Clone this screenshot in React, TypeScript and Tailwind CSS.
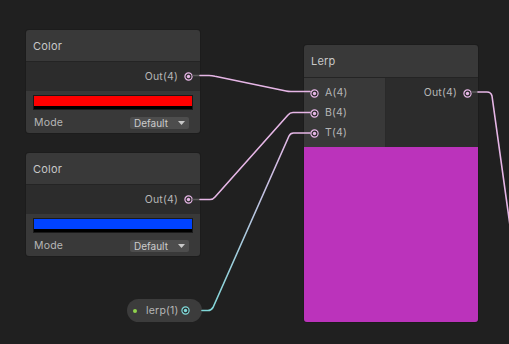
import React from 'react'

const PINK = '#e6b6e6'
const CYAN = '#7fd8d8'

function Port({ color = PINK }: { color?: string }) {
  return (
    <svg width="9" height="9" viewBox="0 0 9 9" className="shrink-0">
      <circle cx="4.5" cy="4.5" r="3.6" fill="#2b2b2b" stroke={color} strokeWidth="1.2" />
      <circle cx="4.5" cy="4.5" r="1.7" fill={color} />
    </svg>
  )
}

function ColorNode({ top, swatch }: { top: string; swatch: string }) {
  return (
    <div className={`absolute left-[26px] ${top} w-[174px] rounded-[3px] overflow-hidden bg-[#393939] shadow-[0_0_0_1px_#1c1c1c]`}>
      <div className="h-[31px] flex items-center pt-[1px] px-[7px] text-[11px] text-[#c8c8c8] tracking-[0.2px]">Color</div>
      <div className="h-[30px] bg-[#2c2c2c] border-t border-[#242424] flex items-center justify-end gap-[6px] pr-[7px] text-[10.5px] text-[#b6b6b6] tracking-[0.2px]">
        <span>Out(4)</span>
        <Port />
      </div>
      <div className="px-[7px] pt-[4px] pb-[4px]">
        <div className="h-[15px] border border-[#1a1a1a] bg-black">
          <div className={`h-[10px] ${swatch}`} />
        </div>
        <div className="mt-[7px] h-[12px] flex items-center justify-between">
          <span className="ml-[1px] text-[10.5px] text-[#b6b6b6] tracking-[0.2px]">Mode</span>
          <div className="w-[59px] h-[12px] mr-[4px] rounded-[2px] bg-[#4d4d4d] flex items-center justify-between pl-[4px] pr-[4px] text-[10px] text-[#cccccc]">
            <span>Default</span>
            <svg width="7" height="4" viewBox="0 0 7 4">
              <path d="M0 0 H7 L3.5 4 Z" fill="#c8c8c8" />
            </svg>
          </div>
        </div>
      </div>
    </div>
  )
}

export default function App() {
  return (
    <div
      className="relative w-[509px] h-[344px] overflow-hidden bg-[#202020]"
      style={{ fontFamily: 'Inter, "Noto Sans", sans-serif' }}
    >
      <ColorNode top="top-[30px]" swatch="bg-[#ff0000]" />
      <ColorNode top="top-[153px]" swatch="bg-[#0043ff]" />

      <div className="absolute left-[304px] top-[45px] w-[174px] rounded-[3px] overflow-hidden bg-[#393939] shadow-[0_0_0_1px_#1c1c1c]">
        <div className="h-[32px] flex items-center pt-[1px] px-[7px] text-[11px] text-[#c8c8c8] tracking-[0.2px]">Lerp</div>
        <div className="h-[70px] flex border-t border-[#242424]">
          <div className="w-[82px] bg-[#393939] pt-[5px] border-r border-[#2a2a2a]">
            {['A(4)', 'B(4)', 'T(4)'].map((l) => (
              <div key={l} className="h-[20px] flex items-center gap-[6px] pl-[6px] text-[10.5px] text-[#b6b6b6] tracking-[0.2px]">
                <Port />
                <span>{l}</span>
              </div>
            ))}
          </div>
          <div className="flex-1 bg-[#2c2c2c] pt-[5px]">
            <div className="h-[20px] flex items-center justify-end gap-[6px] pr-[6px] text-[10.5px] text-[#b6b6b6] tracking-[0.2px]">
              <span>Out(4)</span>
              <Port />
            </div>
          </div>
        </div>
        <div className="h-[175px] bg-[#bb33bb]" />
      </div>

      <div className="absolute left-[127px] top-[299px] w-[75px] h-[23px] rounded-full bg-[#3c3c3c] flex items-center">
        <div className="ml-[6px] w-[4px] h-[4px] rounded-full bg-[#8fd24c]" />
        <span className="ml-[9px] text-[10.5px] text-[#b6b6b6] tracking-[0.2px]">lerp(1)</span>
        <div className="ml-auto mr-[12px] flex">
          <Port color={CYAN} />
        </div>
      </div>

      <svg className="absolute inset-0 pointer-events-none" width="509" height="344">
        <defs>
          <linearGradient id="tEdge" gradientUnits="userSpaceOnUse" x1="202" y1="311" x2="300" y2="133">
            <stop offset="0" stopColor={CYAN} />
            <stop offset="1" stopColor={PINK} />
          </linearGradient>
        </defs>
        <g fill="none" strokeWidth="1.6" strokeLinecap="round" strokeLinejoin="round">
          <path d="M193 75.5 H200" stroke="#5a5a5a" />
          <path d="M193 199.5 H200" stroke="#5a5a5a" />
          <path d="M472 92 H478" stroke="#5a5a5a" />
          <path d="M200 75.5 H209 Q212 75.5 215 76.2 L286 91 Q288 91.5 291 91.5 H310" stroke={PINK} />
          <path d="M200 199.5 H210 Q213 199.5 215 197 L288 115 Q290 112.5 293 112.5 H310" stroke={PINK} />
          <path d="M202 310.5 H208 Q211 310.5 213 307.5 L289 136 Q290.5 133 293.5 133 H310" stroke="url(#tEdge)" />
          <path d="M478 92 H487 Q491 92 492 96 L512 240" stroke={PINK} />
        </g>
      </svg>
    </div>
  )
}
